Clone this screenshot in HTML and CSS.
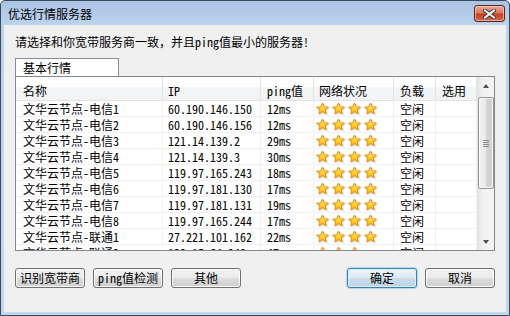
FILE: index.html
```html
<!DOCTYPE html>
<html lang="zh-CN">
<head>
<meta charset="utf-8">
<title>优选行情服务器</title>
<link rel="stylesheet" href="styles.css">
</head>
<body>
<svg class="defs" width="0" height="0" aria-hidden="true">
  <defs>
    <linearGradient id="sg" x1="0" y1="0" x2="0" y2="1">
      <stop offset="0" stop-color="#fff6b0"/>
      <stop offset="0.5" stop-color="#ffd23a"/>
      <stop offset="1" stop-color="#f9b10c"/>
    </linearGradient>
    <symbol id="star" viewBox="0 0 15 15">
      <path d="M8 2.2 L9.9 6.1 L14.2 6.5 L10.9 9.3 L11.9 13.6 L8 11.3 L4.1 13.6 L5.1 9.3 L1.8 6.5 L6.1 6.1 Z" fill="#d9d9d9" stroke="#d9d9d9" stroke-width="1.4" stroke-linejoin="round" opacity="0.7"/>
      <path d="M7 1.2 L8.9 5.1 L13.2 5.5 L9.9 8.3 L10.9 12.6 L7 10.3 L3.1 12.6 L4.1 8.3 L0.8 5.5 L5.1 5.1 Z" fill="url(#sg)" stroke="#e8900f" stroke-width="1.1" stroke-linejoin="round"/>
    </symbol>
  </defs>
</svg>
<div class="window">
  <div class="titlebar">
    <span class="title">优选行情服务器</span>
    <span class="close">
      <svg width="13" height="10" viewBox="0 0 13 10"><path d="M2 1.5 L11 8.5 M11 1.5 L2 8.5" stroke="#3a3a3a" stroke-width="4" stroke-linecap="square"/><path d="M2 1.5 L11 8.5 M11 1.5 L2 8.5" stroke="#f4f4f4" stroke-width="2" stroke-linecap="square"/></svg>
    </span>
  </div>
  <div class="body">
    <div class="hint">请选择和你宽带服务商一致，并且ping值最小的服务器!</div>
    <div class="tab">基本行情</div>
    <div class="listview">
      <div class="grid">
        <div class="row head">
          <div class="c c1">名称</div><div class="c c2">IP</div><div class="c c3">ping值</div><div class="c c4">网络状况</div><div class="c c5">负载</div><div class="c c6">选用</div>
        </div>
        <div class="row"><div class="c c1">文华云节点-电信1</div><div class="c c2">60.190.146.150</div><div class="c c3">12ms</div><div class="c c4 stars"><svg><use href="#star"/></svg><svg><use href="#star"/></svg><svg><use href="#star"/></svg><svg><use href="#star"/></svg></div><div class="c c5">空闲</div><div class="c c6"></div></div>
        <div class="row"><div class="c c1">文华云节点-电信2</div><div class="c c2">60.190.146.156</div><div class="c c3">12ms</div><div class="c c4 stars"><svg><use href="#star"/></svg><svg><use href="#star"/></svg><svg><use href="#star"/></svg><svg><use href="#star"/></svg></div><div class="c c5">空闲</div><div class="c c6"></div></div>
        <div class="row"><div class="c c1">文华云节点-电信3</div><div class="c c2">121.14.139.2</div><div class="c c3">29ms</div><div class="c c4 stars"><svg><use href="#star"/></svg><svg><use href="#star"/></svg><svg><use href="#star"/></svg><svg><use href="#star"/></svg></div><div class="c c5">空闲</div><div class="c c6"></div></div>
        <div class="row"><div class="c c1">文华云节点-电信4</div><div class="c c2">121.14.139.3</div><div class="c c3">30ms</div><div class="c c4 stars"><svg><use href="#star"/></svg><svg><use href="#star"/></svg><svg><use href="#star"/></svg><svg><use href="#star"/></svg></div><div class="c c5">空闲</div><div class="c c6"></div></div>
        <div class="row"><div class="c c1">文华云节点-电信5</div><div class="c c2">119.97.165.243</div><div class="c c3">18ms</div><div class="c c4 stars"><svg><use href="#star"/></svg><svg><use href="#star"/></svg><svg><use href="#star"/></svg><svg><use href="#star"/></svg></div><div class="c c5">空闲</div><div class="c c6"></div></div>
        <div class="row"><div class="c c1">文华云节点-电信6</div><div class="c c2">119.97.181.130</div><div class="c c3">17ms</div><div class="c c4 stars"><svg><use href="#star"/></svg><svg><use href="#star"/></svg><svg><use href="#star"/></svg><svg><use href="#star"/></svg></div><div class="c c5">空闲</div><div class="c c6"></div></div>
        <div class="row"><div class="c c1">文华云节点-电信7</div><div class="c c2">119.97.181.131</div><div class="c c3">19ms</div><div class="c c4 stars"><svg><use href="#star"/></svg><svg><use href="#star"/></svg><svg><use href="#star"/></svg><svg><use href="#star"/></svg></div><div class="c c5">空闲</div><div class="c c6"></div></div>
        <div class="row"><div class="c c1">文华云节点-电信8</div><div class="c c2">119.97.165.244</div><div class="c c3">17ms</div><div class="c c4 stars"><svg><use href="#star"/></svg><svg><use href="#star"/></svg><svg><use href="#star"/></svg><svg><use href="#star"/></svg></div><div class="c c5">空闲</div><div class="c c6"></div></div>
        <div class="row"><div class="c c1">文华云节点-联通1</div><div class="c c2">27.221.101.162</div><div class="c c3">22ms</div><div class="c c4 stars"><svg><use href="#star"/></svg><svg><use href="#star"/></svg><svg><use href="#star"/></svg><svg><use href="#star"/></svg></div><div class="c c5">空闲</div><div class="c c6"></div></div>
        <div class="row"><div class="c c1">文华云节点-联通2</div><div class="c c2">123.15.64.240</div><div class="c c3">47ms</div><div class="c c4 stars"><svg><use href="#star"/></svg><svg><use href="#star"/></svg><svg><use href="#star"/></svg></div><div class="c c5">空闲</div><div class="c c6"></div></div>
      </div>
      <div class="scrollbar">
        <div class="sbtn"><span class="arrow up"></span></div>
        <div class="track"><div class="thumb"><span class="grip"></span></div></div>
        <div class="sbtn"><span class="arrow down"></span></div>
      </div>
    </div>
    <div class="buttons">
      <button class="btn">识别宽带商</button>
      <button class="btn">ping值检测</button>
      <button class="btn">其他</button>
      <button class="btn default push">确定</button>
      <button class="btn">取消</button>
    </div>
  </div>
</div>
</body>
</html>
```
FILE: styles.css
```css
* { box-sizing: border-box; }
html, body { margin: 0; padding: 0; }
body {
  width: 510px;
  height: 316px;
  overflow: hidden;
  font-family: "Noto Sans Mono CJK SC", "Noto Sans CJK SC", sans-serif;
  font-size: 12px;
  line-height: 16px;
  color: #000;
  background: #fff;
}
.defs { position: absolute; width: 0; height: 0; }

.window {
  width: 510px;
  height: 316px;
  display: flex;
  flex-direction: column;
  border: 1px solid #3b4a5a;
  border-radius: 5px 5px 0 0;
  background: linear-gradient(#a9c3e3 0, #bcd3ec 24px, #c1d8ef 100%);
  padding: 0 3px 3px;
}
.titlebar {
  height: 24px;
  flex: none;
  display: flex;
  align-items: flex-start;
}
.title {
  margin: 5px 0 0 4px;
  flex: 1;
}
.close {
  margin: 4px 1px 0 0;
  width: 31px;
  height: 17px;
  border: 1px solid #5b2020;
  border-radius: 3px;
  background: linear-gradient(#e9a99a 0, #d8775f 45%, #c4401f 55%, #d5694c 100%);
  box-shadow: inset 0 0 0 1px rgba(255, 220, 210, 0.6);
  display: flex;
  align-items: center;
  justify-content: center;
}

.body {
  flex: 1;
  background: #f0f0f0;
  padding: 9px 11px 0 11px;
  display: flex;
  flex-direction: column;
}
.hint { height: 16px; }
.tab {
  margin-top: 8px;
  width: 104px;
  height: 18px;
  border: 1px solid #898c95;
  border-bottom: none;
  background: #fff;
  padding: 1px 0 0 7px;
}
.listview {
  width: 480px;
  height: 175px;
  border: 1px solid #828790;
  background: #fff;
  display: flex;
  overflow: hidden;
}
.grid {
  width: 461px;
  flex: none;
  overflow: hidden;
}
.row {
  display: flex;
  height: 16px;
  border-bottom: 1px solid #f0f0f0;
}
.row.head {
  height: 24px;
  background: linear-gradient(#ffffff 0, #ffffff 45%, #f4f5f6 45%, #f2f3f4 100%);
  border-bottom: 1px solid #e3e3e3;
}
.c {
  flex: none;
  border-right: 1px solid #f0f0f0;
  padding-left: 5px;
  white-space: nowrap;
  line-height: 16px;
}
.head .c {
  border-right-color: #e3e4e6;
  padding-top: 6px;
  line-height: 16px;
}
.c1 { width: 147px; padding-left: 7px; }
.c2 { width: 98px; }
.c3 { width: 53px; padding-left: 6px; }
.c4 { width: 80px; }
.c5 { width: 42px; padding-left: 6px; }
.c6 { width: 41px; padding-left: 6px; }
.stars {
  display: flex;
  align-items: center;
  gap: 2px;
  padding-left: 2px;
}
.stars svg {
  width: 14px;
  height: 14px;
  flex: none;
}

.scrollbar {
  width: 17px;
  flex: none;
  display: flex;
  flex-direction: column;
  background: linear-gradient(to right, #e3e3e3, #f2f2f2 40%, #f4f4f4);
}
.sbtn {
  height: 17px;
  flex: none;
  display: flex;
  align-items: center;
  justify-content: center;
}
.arrow {
  width: 0;
  height: 0;
  border-left: 3.5px solid transparent;
  border-right: 3.5px solid transparent;
}
.arrow.up { border-bottom: 4px solid #4d4d4d; }
.arrow.down { border-top: 4px solid #4d4d4d; }
.track {
  flex: 1;
  padding-top: 3px;
}
.thumb {
  width: 16px;
  margin-left: 1px;
  height: 92px;
  border: 1px solid #979797;
  border-radius: 2px;
  background: linear-gradient(to right, #f3f3f3, #e8e8e8 50%, #d6d6d6 51%, #cfcfcf);
  box-shadow: inset 0 0 0 1px #f8f8f8;
  display: flex;
  align-items: center;
  justify-content: center;
}
.grip {
  width: 6px;
  height: 7px;
  background: repeating-linear-gradient(#8a8a8a 0, #8a8a8a 1px, transparent 1px, transparent 2px);
}

.buttons {
  margin-top: 17px;
  display: flex;
  gap: 8px;
}
.btn {
  width: 70px;
  height: 20px;
  padding: 0;
  font: inherit;
  line-height: 18px;
  color: #000;
  text-align: center;
  border: 1px solid #707070;
  border-radius: 3px;
  background: linear-gradient(#f2f2f2 0, #ebebeb 50%, #dddddd 50%, #cfcfcf 100%);
  box-shadow: inset 0 0 0 1px #fbfbfb;
}
.btn.push { margin-left: auto; }
.btn.default {
  border-color: #3c7fb1;
  background: linear-gradient(#eaf3fa 0, #dde9f3 50%, #c9dcec 50%, #bfd3e6 100%);
  box-shadow: inset 0 0 0 1px #d6f1fd, 0 0 1px 1px rgba(90, 170, 230, 0.35);
}
```
